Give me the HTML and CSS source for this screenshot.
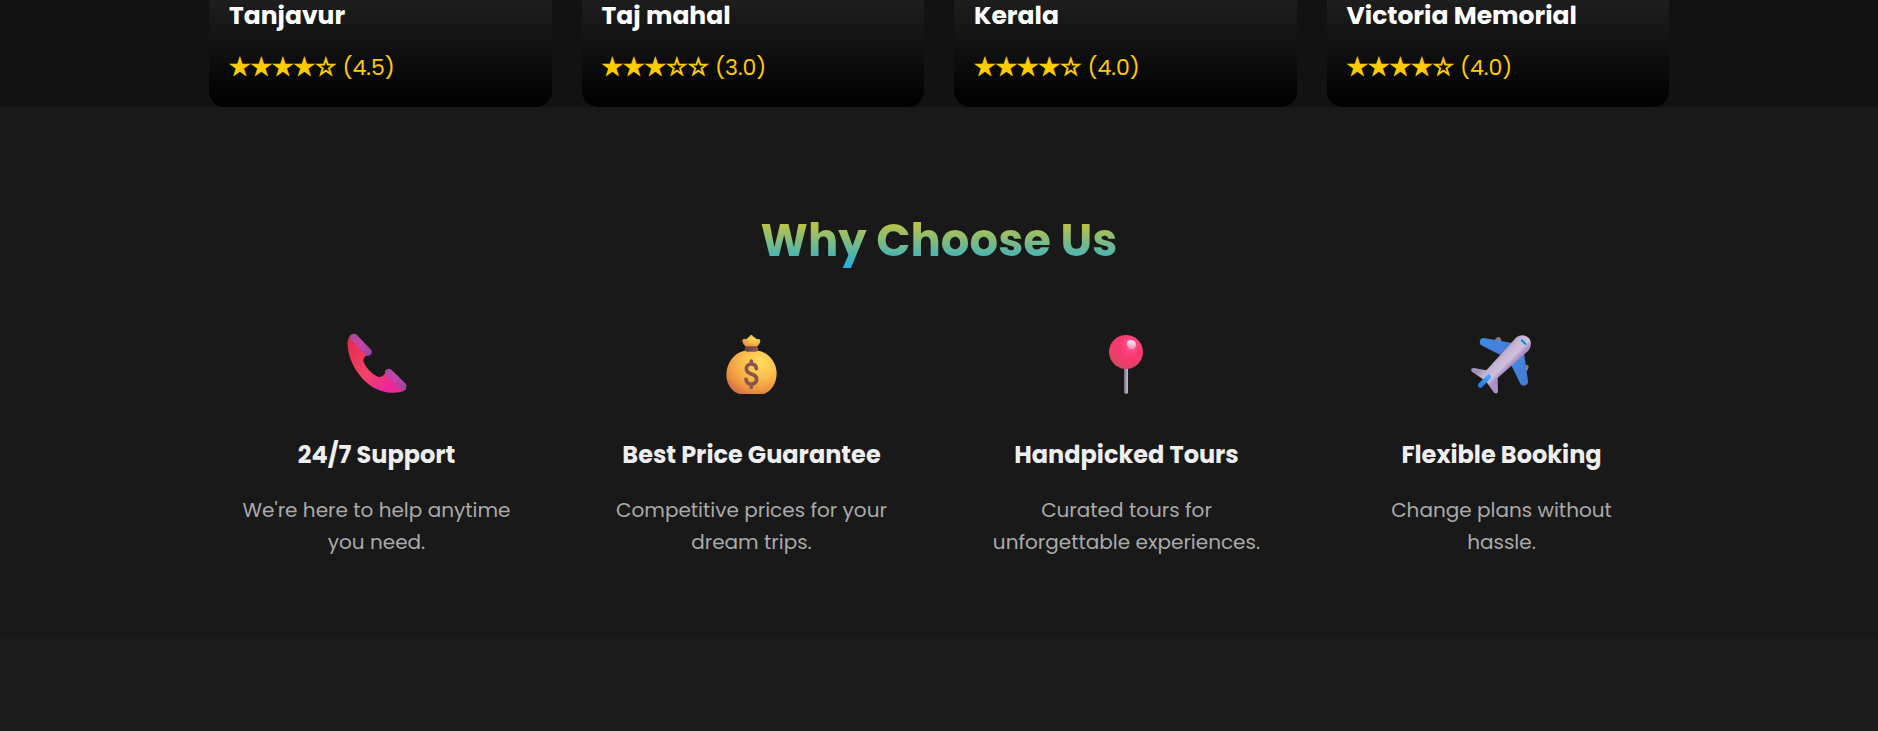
FILE: index.html
```html
<!DOCTYPE html>
<html lang="en">
<head>
<meta charset="utf-8">
<meta name="viewport" content="width=device-width, initial-scale=1">
<title>Why Choose Us</title>
<link rel="stylesheet" href="styles.css">
</head>
<body>
<section class="destinations">
  <div class="container cards">
    <article class="card"><h3 class="card-title">Tanjavur</h3><p class="rating"><span class="stars">★★★★☆</span> (4.5)</p></article>
    <article class="card"><h3 class="card-title">Taj mahal</h3><p class="rating"><span class="stars">★★★☆☆</span> (3.0)</p></article>
    <article class="card"><h3 class="card-title">Kerala</h3><p class="rating"><span class="stars">★★★★☆</span> (4.0)</p></article>
    <article class="card"><h3 class="card-title">Victoria Memorial</h3><p class="rating"><span class="stars">★★★★☆</span> (4.0)</p></article>
  </div>
</section>
<section class="why">
  <h2 class="why-title">Why Choose Us</h2>
  <div class="container features">
    <article class="feature">
      <svg class="icon" viewBox="51 42 180 180" aria-hidden="true">
        <defs>
          <linearGradient id="ph" x1="0" y1="0" x2="1" y2="1"><stop offset="0" stop-color="#e5284b"/><stop offset=".5" stop-color="#f04368"/><stop offset=".8" stop-color="#f0259c"/><stop offset="1" stop-color="#e02f8f"/></linearGradient>
          <linearGradient id="pe" x1="0" y1="0" x2="1" y2="1"><stop offset="0" stop-color="#a44a9c"/><stop offset=".5" stop-color="#c844aa"/><stop offset="1" stop-color="#8d469c"/></linearGradient>
        </defs>
        <path fill="url(#ph)" d="M62 46C51 54 51 75 56 98C64 135 90 175 122 197C149 216 184 222 211 216C219 214 225 211 229 206L173 151L161 165C155 171 149 173 142 170C124 160 108 143 101 126C98 118 102 112 109 107L120 104Z"/>
        <path fill="url(#pe)" d="M62 46C67 40 76 40 81 45L123 89C128 94 126 101 120 105C115 110 109 107 104 102L62 57C58 53 58 49 62 46Z"/>
        <path fill="url(#pe)" d="M167 151C172 145 180 145 185 150L226 190C231 196 231 202 226 207C221 211 214 208 209 203L168 164C164 160 163 155 167 151Z"/>
      </svg>
      <h3 class="feature-title">24/7 Support</h3>
      <p class="feature-text">We're here to help anytime you need.</p>
    </article>
    <article class="feature">
      <svg class="icon" viewBox="36 42 180 180" aria-hidden="true">
        <defs>
          <radialGradient id="bag" cx=".68" cy=".25" r=".85"><stop offset="0" stop-color="#ffdc5c"/><stop offset=".45" stop-color="#f9bd4b"/><stop offset=".8" stop-color="#ec9340"/><stop offset="1" stop-color="#cf6d50"/></radialGradient>
          <linearGradient id="tie" x1="0" x2="1"><stop offset="0" stop-color="#684142"/><stop offset="1" stop-color="#8b5850"/></linearGradient>
        </defs>
        <path fill="url(#bag)" d="M97 64C96 56 104 55 110 58C111 52 117 53 119 48C122 43 127 44 129 49C131 53 137 52 139 58C145 55 152 57 151 64C149 73 144 79 136 84H112C104 79 99 73 97 64Z"/>
        <path fill="url(#bag)" d="M103 92H145C179 99 200 129 200 160C200 190 184 212 168 219C163 222 158 222 153 222H96C91 222 86 222 81 219C64 212 49 190 49 165C49 129 72 99 103 92Z"/>
        <rect x="104" y="79" width="40" height="16" rx="7" fill="url(#tie)"/>
        <path fill="none" stroke="#8b534b" stroke-width="11" stroke-linecap="round" stroke-linejoin="round" d="M139 146C138 135 131 132 124 132C115 132 109 138 109 146C109 155 116 159 124 162C133 165 140 169 140 178C140 187 133 192 124 192C115 192 109 187 108 178M124 123V132M124 192V202"/>
      </svg>
      <h3 class="feature-title">Best Price Guarantee</h3>
      <p class="feature-text">Competitive prices for your dream trips.</p>
    </article>
    <article class="feature">
      <svg class="icon" viewBox="51 42 180 180" aria-hidden="true">
        <defs>
          <radialGradient id="ball" cx=".65" cy=".3" r=".78"><stop offset="0" stop-color="#ff5792"/><stop offset=".45" stop-color="#fa3770"/><stop offset=".78" stop-color="#ea3e66"/><stop offset="1" stop-color="#b95560"/></radialGradient>
          <linearGradient id="needle" x1="0" x2="1"><stop offset="0" stop-color="#75677f"/><stop offset=".5" stop-color="#a398ae"/><stop offset="1" stop-color="#c5b9cf"/></linearGradient>
          <linearGradient id="shine" x1="0" y1="0" x2="0" y2="1"><stop offset="0" stop-color="#ffe9f3"/><stop offset="1" stop-color="#ff8db5"/></linearGradient>
        </defs>
        <path fill="url(#needle)" d="M132 140H144V217Q144 222 138 222Q132 222 132 217Z"/>
        <circle cx="138" cy="96" r="51" fill="url(#ball)"/>
        <path fill="url(#shine)" d="M142 65C148 57 161 59 166 67C170 75 167 86 158 88C148 90 137 75 142 65Z"/>
      </svg>
      <h3 class="feature-title">Handpicked Tours</h3>
      <p class="feature-text">Curated tours for unforgettable experiences.</p>
    </article>
    <article class="feature">
      <svg class="icon" viewBox="51 42 180 180" aria-hidden="true">
        <defs>
          <linearGradient id="hull" gradientUnits="userSpaceOnUse" x1="130" y1="96" x2="168" y2="134"><stop offset="0" stop-color="#a291b5"/><stop offset=".35" stop-color="#c8b5d2"/><stop offset=".75" stop-color="#cfc1dd"/><stop offset="1" stop-color="#ac8fc3"/></linearGradient>
          <linearGradient id="wing" x1="0" y1="0" x2="1" y2="1"><stop offset="0" stop-color="#3f8be5"/><stop offset="1" stop-color="#4778d2"/></linearGradient>
          <linearGradient id="tail" gradientUnits="userSpaceOnUse" x1="101" y1="171" x2="76" y2="196"><stop offset="0" stop-color="#48a5ff"/><stop offset="1" stop-color="#2f77dc"/></linearGradient>
        </defs>
        <rect x="121" y="52" width="17" height="17" rx="6" fill="#85798d" transform="rotate(-30 130 60)"/>
        <rect x="207" y="134" width="13" height="19" rx="6" fill="#85798d" transform="rotate(20 213 143)"/>
        <path fill="url(#wing)" d="M86 54L172 69L136 105L79 76C70 68 75 54 86 54Z"/>
        <path fill="url(#wing)" d="M207 98L219 184C221 195 203 202 197 193L168 134Z"/>
        <path fill="url(#hull)" d="M182 54C193 43 212 43 222 55C231 65 229 82 219 93L128 174L129 213C129 221 121 223 116 217L93 184L52 156C45 151 49 143 57 144L94 151Z"/>
        <path d="M101 171L76 196" stroke="url(#tail)" stroke-width="15" stroke-linecap="round"/>
        <path d="M199 60L212 72" stroke="#8ce0ff" stroke-width="9" stroke-linecap="round"/>
        <path d="M200 61L212 72" stroke="#187ebd" stroke-width="6" stroke-linecap="round"/>
      </svg>
      <h3 class="feature-title">Flexible Booking</h3>
      <p class="feature-text">Change plans without hassle.</p>
    </article>
  </div>
</section>
</body>
</html>
```
FILE: styles.css
```css
* { box-sizing: border-box; margin: 0; padding: 0; }

body {
  background: #1c1c1c;
  color: #fff;
  font-family: Poppins, Inter, "Open Sans", sans-serif;
  font-size: 20px;
  line-height: 32px;
}

.container {
  width: calc(100% - 40px);
  max-width: 1460px;
  margin: 0 auto;
  display: grid;
  grid-template-columns: repeat(4, 1fr);
}

.destinations { background: #121212; }
.cards { gap: 30px; }

.card {
  padding: 0 20px 21px;
  border-radius: 0 0 16px 16px;
  background: linear-gradient(#1e1e1e, #000);
}

.card-title { font-size: 25px; font-weight: 700; line-height: 32px; }

.rating {
  margin-top: 18px;
  color: #fc0;
  font-size: 22px;
  line-height: 36px;
}

.stars {
  font-family: "DejaVu Sans", sans-serif;
  font-size: 24px;
  line-height: 24px;
  -webkit-text-stroke: 1px #fc0;
}

.why {
  padding: 98px 0 80px;
  background: #191919;
  text-align: center;
}

.why-title {
  width: fit-content;
  margin: 0 auto 57px;
  font-size: 45px;
  font-weight: 700;
  line-height: 72px;
  background: linear-gradient(#fc0, #0af);
  -webkit-background-clip: text;
  background-clip: text;
  color: transparent;
}

.features { gap: 40px; }
.feature { padding: 0 24px; }
.icon { display: block; width: 60px; height: 60px; margin: 0 auto 45px; overflow: visible; }

.feature-title {
  margin-bottom: 23px;
  color: #eee;
  font-size: 24px;
  font-weight: 700;
}

.feature-text { color: #aaa; font-size: 20px; }

@media (max-width: 1100px) {
  .container { grid-template-columns: repeat(2, 1fr); }
}
```
